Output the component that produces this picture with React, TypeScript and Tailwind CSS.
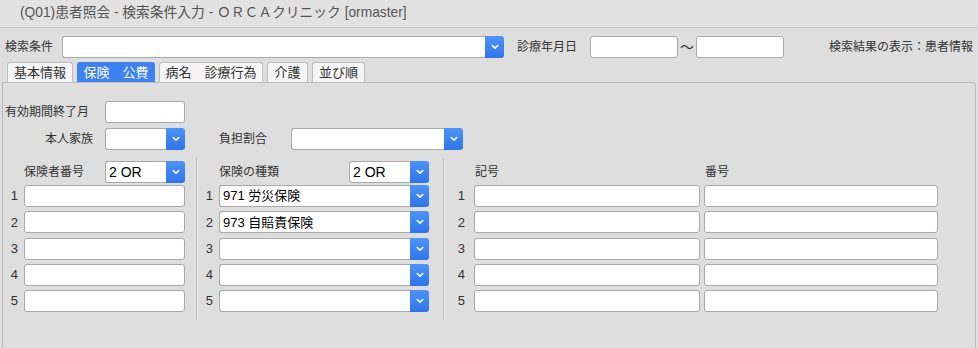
import React from "react";

function Chevron() {
  return (
    <svg width="8" height="6" viewBox="0 0 8 6" fill="none">
      <polyline points="1.2,1.5 4,4.2 6.8,1.5" stroke="white" strokeWidth="1.6" strokeLinecap="round" strokeLinejoin="round" />
    </svg>
  );
}

function TextBox({ w, value }: { w: string; value?: string }) {
  return (
    <div className={`${w} h-[22px] bg-white border border-[#a9a9a9] rounded-[3px] flex items-center px-[4px] text-[13px] text-black`}>
      {value}
    </div>
  );
}

function Combo({ w, value, big }: { w: string; value?: string; big?: boolean }) {
  return (
    <div className={`${w} h-[22px] flex`}>
      <div className={`flex-1 bg-white border border-r-0 border-[#a9a9a9] rounded-l-[3px] flex items-center px-[3px] ${big ? "text-[14px]" : "text-[13px]"} text-black whitespace-nowrap overflow-hidden`}>
        {value}
      </div>
      <div className="w-[19px] bg-gradient-to-b from-[#4d93f7] to-[#2f75ea] rounded-r-[3px] flex items-center justify-center">
        <Chevron />
      </div>
    </div>
  );
}

const tabs = [
  { label: "基本情報", w: "w-[66px]" },
  { label: "保険　公費", w: "w-[78px]", active: true },
  { label: "病名　診療行為", w: "w-[104px]" },
  { label: "介護", w: "w-[41px]" },
  { label: "並び順", w: "w-[53px]" },
];

const kinds = ["971 労災保険", "973 自賠責保険", "", "", ""];

export default function App() {
  return (
    <div className="w-[978px] h-[348px] bg-[#dedede] text-[12px] text-[#333] font-['Liberation_Sans','Noto_Sans_CJK_JP',sans-serif] overflow-hidden flex flex-col">
      {/* title */}
      <div className="h-[28px] shrink-0 border-b border-[#c6c6c6] bg-[#e2e2e2] pl-[20px] flex items-center text-[13.75px] text-[#555]">
        (Q01)患者照会 - 検索条件入力 - ＯＲＣＡクリニック [ormaster]
      </div>

      {/* search row */}
      <div className="mt-[8px] h-[22px] flex items-center">
        <div className="w-[62px] pl-[5px]">検索条件</div>
        <Combo w="w-[442px]" />
        <div className="ml-[13px] w-[73px]">診療年月日</div>
        <TextBox w="w-[88px]" />
        <div className="w-[18px] text-center text-[14px]">～</div>
        <TextBox w="w-[88px]" />
        <div className="ml-auto pr-[5px]">検索結果の表示：患者情報</div>
      </div>

      {/* tabs */}
      <div className="mt-[4px] h-[20px] flex items-end gap-[4px] pl-[7px]">
        {tabs.map((t) => (
          <div
            key={t.label}
            className={`${t.w} h-[20px] rounded-t-[3px] border border-b-0 flex items-center justify-center text-[13px] ${
              t.active ? "bg-[#3d82f0] border-[#3d82f0] text-white" : "bg-[#f5f5f5] border-[#bdbdbd] text-[#333]"
            }`}
          >
            {t.label}
          </div>
        ))}
      </div>

      {/* panel */}
      <div className="flex-1 mx-[2px] border border-b-0 border-[#bcbcbc] rounded-tr-[4px] pt-[18px]">
        <div className="h-[22px] flex items-center">
          <div className="w-[102px] pl-[2px]">有効期間終了月</div>
          <TextBox w="w-[80px]" />
        </div>
        <div className="mt-[5px] h-[22px] flex items-center">
          <div className="w-[102px] text-right pr-[12px]">本人家族</div>
          <Combo w="w-[80px]" />
          <div className="ml-[34px] w-[72px]">負担割合</div>
          <Combo w="w-[172px]" />
        </div>

        <div className="mt-[8px] h-[162px] flex">
          {/* column 1 */}
          <div className="w-[193px] pt-[3px] flex flex-col">
            <div className="h-[22px] flex items-center pl-[21px]">
              <div className="w-[81px]">保険者番号</div>
              <Combo w="w-[80px]" value="2 OR" big />
            </div>
            <div className="mt-[2px] flex flex-col gap-[4.3px]">
              {[1, 2, 3, 4, 5].map((n) => (
                <div key={n} className="h-[22px] flex items-center">
                  <div className="w-[21px] text-right pr-[6px] text-[13px]">{n}</div>
                  <TextBox w="w-[161px]" />
                </div>
              ))}
            </div>
          </div>
          <div className="w-[2px] border-l border-[#b8b8b8] bg-[#ececec]" />

          {/* column 2 */}
          <div className="w-[245px] pt-[3px] flex flex-col">
            <div className="h-[22px] flex items-center pl-[21px]">
              <div className="w-[130px]">保険の種類</div>
              <Combo w="w-[80px]" value="2 OR" big />
            </div>
            <div className="mt-[2px] flex flex-col gap-[4.3px]">
              {kinds.map((k, i) => (
                <div key={i} className="h-[22px] flex items-center">
                  <div className="w-[21px] text-right pr-[6px] text-[13px]">{i + 1}</div>
                  <Combo w="w-[210px]" value={k} />
                </div>
              ))}
            </div>
          </div>
          <div className="w-[2px] border-l border-[#b8b8b8] bg-[#ececec]" />

          {/* column 3 */}
          <div className="flex-1 pt-[3px] flex flex-col">
            <div className="h-[22px] flex items-center pl-[30px]">
              <div className="w-[230px]">記号</div>
              <div>番号</div>
            </div>
            <div className="mt-[2px] flex flex-col gap-[4.3px]">
              {[1, 2, 3, 4, 5].map((n) => (
                <div key={n} className="h-[22px] flex items-center">
                  <div className="w-[29px] text-right pr-[9px] text-[13px]">{n}</div>
                  <TextBox w="w-[226px]" />
                  <div className="w-[4px]" />
                  <TextBox w="w-[234px]" />
                </div>
              ))}
            </div>
          </div>
        </div>
      </div>
    </div>
  );
}
